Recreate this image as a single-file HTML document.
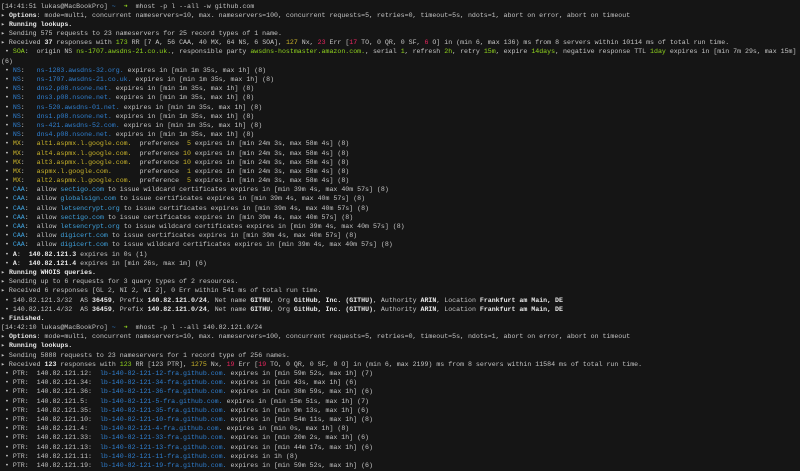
<!DOCTYPE html>
<html><head><meta charset="utf-8"><style>
html,body{margin:0;padding:0;background:#151515;width:800px;height:471px;overflow:hidden}
#t{position:absolute;top:1.5px;left:1px;display:grid;grid-template-rows:repeat(50,9.19px);grid-auto-rows:9.19px;font-family:"Liberation Mono","DejaVu Sans Mono",monospace;font-size:6.6px;color:#c4c4c4}
#t div{height:9.19px;line-height:9.19px;white-space:pre;overflow:visible;min-height:0}
b{color:#e8e8e8;font-weight:bold}
.bl{color:#2f7fd0}.y{color:#c9b32a}.g{color:#8fd21e}.r{color:#e8265e}.c{color:#3fa3e0}
</style></head><body><div id="t">
<div>[14:41:51 lukas@MacBookPro] <span class="bl">~</span>  <span class="g">➜</span>  mhost -p l --all -w github.com</div>
<div>▸ <b>Options</b>: mode=multi, concurrent nameservers=10, max. nameservers=100, concurrent requests=5, retries=0, timeout=5s, ndots=1, abort on error, abort on timeout</div>
<div>▸ <b>Running lookups.</b></div>
<div>▸ Sending 575 requests to 23 nameservers for 25 record types of 1 name.</div>
<div>▸ Received <b>37</b> responses with <span class="g">173</span> RR [7 A, 56 CAA, 40 MX, 64 NS, 6 SOA], <span class="y">127</span> Nx, <span class="r">23</span> Err [<span class="r">17</span> TO, 0 QR, 0 SF, <span class="r">6</span> O] in (min 6, max 136) ms from 8 servers within 10114 ms of total run time.</div>
<div> • <span class="g">SOA</span>:  origin NS <span class="g">ns-1707.awsdns-21.co.uk.</span>, responsible party <span class="g">awsdns-hostmaster.amazon.com.</span>, serial <span class="g">1</span>, refresh <span class="g">2h</span>, retry <span class="g">15m</span>, expire <span class="g">14days</span>, negative response TTL <span class="g">1day</span> expires in [min 7m 29s, max 15m]</div>
<div>(6)</div>
<div> • <span class="bl">NS</span>:   <span class="bl">ns-1283.awsdns-32.org.</span> expires in [min 1m 35s, max 1h] (8)</div>
<div> • <span class="bl">NS</span>:   <span class="bl">ns-1707.awsdns-21.co.uk.</span> expires in [min 1m 35s, max 1h] (8)</div>
<div> • <span class="bl">NS</span>:   <span class="bl">dns2.p08.nsone.net.</span> expires in [min 1m 35s, max 1h] (8)</div>
<div> • <span class="bl">NS</span>:   <span class="bl">dns3.p08.nsone.net.</span> expires in [min 1m 35s, max 1h] (8)</div>
<div> • <span class="bl">NS</span>:   <span class="bl">ns-520.awsdns-01.net.</span> expires in [min 1m 35s, max 1h] (8)</div>
<div> • <span class="bl">NS</span>:   <span class="bl">dns1.p08.nsone.net.</span> expires in [min 1m 35s, max 1h] (8)</div>
<div> • <span class="bl">NS</span>:   <span class="bl">ns-421.awsdns-52.com.</span> expires in [min 1m 35s, max 1h] (8)</div>
<div> • <span class="bl">NS</span>:   <span class="bl">dns4.p08.nsone.net.</span> expires in [min 1m 35s, max 1h] (8)</div>
<div> • <span class="y">MX</span>:   <span class="y">alt1.aspmx.l.google.com.</span>  preference  <span class="y">5</span> expires in [min 24m 3s, max 58m 4s] (8)</div>
<div> • <span class="y">MX</span>:   <span class="y">alt4.aspmx.l.google.com.</span>  preference <span class="y">10</span> expires in [min 24m 3s, max 58m 4s] (8)</div>
<div> • <span class="y">MX</span>:   <span class="y">alt3.aspmx.l.google.com.</span>  preference <span class="y">10</span> expires in [min 24m 3s, max 58m 4s] (8)</div>
<div> • <span class="y">MX</span>:   <span class="y">aspmx.l.google.com.</span>       preference  <span class="y">1</span> expires in [min 24m 3s, max 58m 4s] (8)</div>
<div> • <span class="y">MX</span>:   <span class="y">alt2.aspmx.l.google.com.</span>  preference  <span class="y">5</span> expires in [min 24m 3s, max 58m 4s] (8)</div>
<div> • <span class="c">CAA</span>:  allow <span class="c">sectigo.com</span> to issue wildcard certificates expires in [min 39m 4s, max 40m 57s] (8)</div>
<div> • <span class="c">CAA</span>:  allow <span class="c">globalsign.com</span> to issue certificates expires in [min 39m 4s, max 40m 57s] (8)</div>
<div> • <span class="c">CAA</span>:  allow <span class="c">letsencrypt.org</span> to issue certificates expires in [min 39m 4s, max 40m 57s] (8)</div>
<div> • <span class="c">CAA</span>:  allow <span class="c">sectigo.com</span> to issue certificates expires in [min 39m 4s, max 40m 57s] (8)</div>
<div> • <span class="c">CAA</span>:  allow <span class="c">letsencrypt.org</span> to issue wildcard certificates expires in [min 39m 4s, max 40m 57s] (8)</div>
<div> • <span class="c">CAA</span>:  allow <span class="c">digicert.com</span> to issue certificates expires in [min 39m 4s, max 40m 57s] (8)</div>
<div> • <span class="c">CAA</span>:  allow <span class="c">digicert.com</span> to issue wildcard certificates expires in [min 39m 4s, max 40m 57s] (8)</div>
<div> • <b>A</b>:  <b>140.82.121.3</b> expires in 0s (1)</div>
<div> • <b>A</b>:  <b>140.82.121.4</b> expires in [min 26s, max 1m] (6)</div>
<div>▸ <b>Running WHOIS queries.</b></div>
<div>▸ Sending up to 6 requests for 3 query types of 2 resources.</div>
<div>▸ Received 6 responses [GL 2, NI 2, WI 2], 0 Err within 541 ms of total run time.</div>
<div> • 140.82.121.3/32  AS <b>36459</b>, Prefix <b>140.82.121.0/24</b>, Net name <b>GITHU</b>, Org <b>GitHub, Inc. (GITHU)</b>, Authority <b>ARIN</b>, Location <b>Frankfurt am Main, DE</b></div>
<div> • 140.82.121.4/32  AS <b>36459</b>, Prefix <b>140.82.121.0/24</b>, Net name <b>GITHU</b>, Org <b>GitHub, Inc. (GITHU)</b>, Authority <b>ARIN</b>, Location <b>Frankfurt am Main, DE</b></div>
<div>▸ <b>Finished.</b></div>
<div>[14:42:10 lukas@MacBookPro] <span class="bl">~</span>  <span class="g">➜</span>  mhost -p l --all 140.82.121.0/24</div>
<div>▸ <b>Options</b>: mode=multi, concurrent nameservers=10, max. nameservers=100, concurrent requests=5, retries=0, timeout=5s, ndots=1, abort on error, abort on timeout</div>
<div>▸ <b>Running lookups.</b></div>
<div>▸ Sending 5888 requests to 23 nameservers for 1 record type of 256 names.</div>
<div>▸ Received <b>123</b> responses with <span class="g">123</span> RR [123 PTR], <span class="y">1275</span> Nx, <span class="r">19</span> Err [<span class="r">19</span> TO, 0 QR, 0 SF, 0 O] in (min 6, max 2199) ms from 8 servers within 11584 ms of total run time.</div>
<div> • PTR:  140.82.121.12:  <span class="bl">lb-140-82-121-12-fra.github.com.</span> expires in [min 59m 52s, max 1h] (7)</div>
<div> • PTR:  140.82.121.34:  <span class="bl">lb-140-82-121-34-fra.github.com.</span> expires in [min 43s, max 1h] (6)</div>
<div> • PTR:  140.82.121.36:  <span class="bl">lb-140-82-121-36-fra.github.com.</span> expires in [min 38m 59s, max 1h] (6)</div>
<div> • PTR:  140.82.121.5:   <span class="bl">lb-140-82-121-5-fra.github.com.</span> expires in [min 15m 51s, max 1h] (7)</div>
<div> • PTR:  140.82.121.35:  <span class="bl">lb-140-82-121-35-fra.github.com.</span> expires in [min 9m 13s, max 1h] (6)</div>
<div> • PTR:  140.82.121.10:  <span class="bl">lb-140-82-121-10-fra.github.com.</span> expires in [min 54m 11s, max 1h] (8)</div>
<div> • PTR:  140.82.121.4:   <span class="bl">lb-140-82-121-4-fra.github.com.</span> expires in [min 0s, max 1h] (8)</div>
<div> • PTR:  140.82.121.33:  <span class="bl">lb-140-82-121-33-fra.github.com.</span> expires in [min 20m 2s, max 1h] (6)</div>
<div> • PTR:  140.82.121.13:  <span class="bl">lb-140-82-121-13-fra.github.com.</span> expires in [min 44m 17s, max 1h] (6)</div>
<div> • PTR:  140.82.121.11:  <span class="bl">lb-140-82-121-11-fra.github.com.</span> expires in 1h (8)</div>
<div> • PTR:  140.82.121.19:  <span class="bl">lb-140-82-121-19-fra.github.com.</span> expires in [min 59m 52s, max 1h] (6)</div>
</div></body></html>
